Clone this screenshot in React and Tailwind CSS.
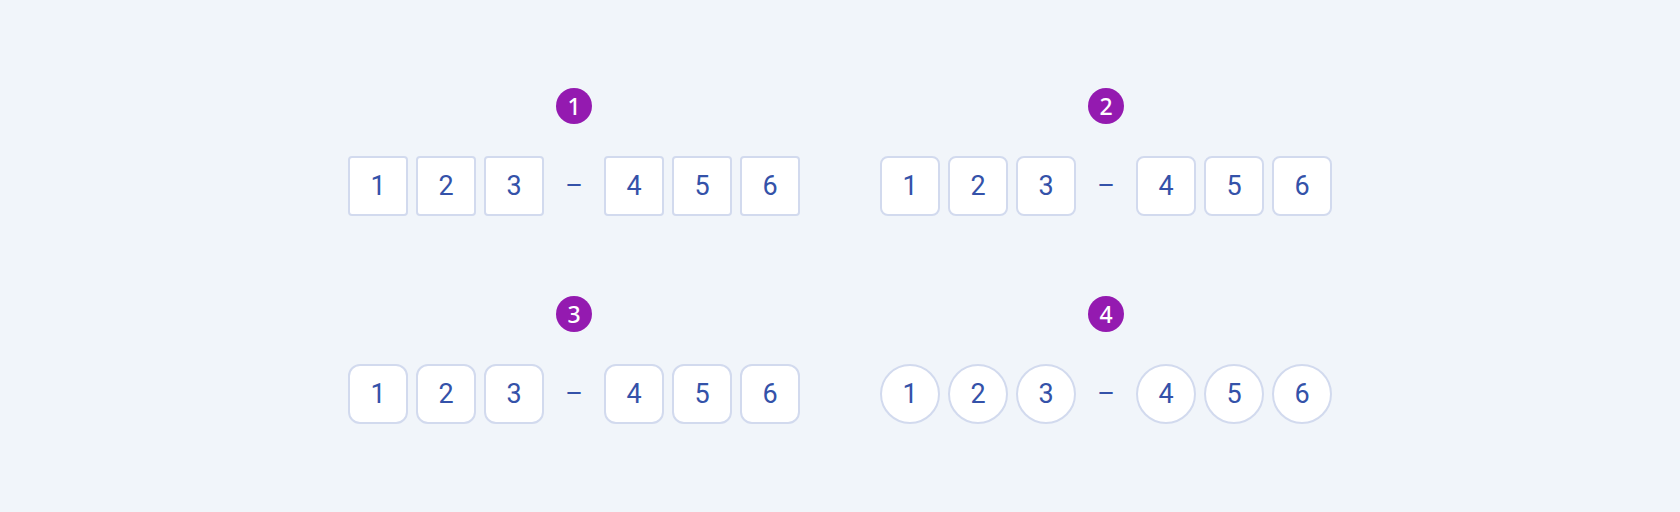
const variants = [
  { id: 1, shape: 'rounded-[4px]' },
  { id: 2, shape: 'rounded-[8px]' },
  { id: 3, shape: 'rounded-[12px]' },
  { id: 4, shape: 'rounded-full' },
]

function DigitCell({ value, shape }) {
  return (
    <div
      className={`flex h-[60px] w-[60px] items-center justify-center border-2 border-[#d2daee] bg-white text-[27px] text-[#3452a9] ${shape}`}
    >
      {value}
    </div>
  )
}

function CodeInput({ id, shape }) {
  return (
    <div className="flex flex-col items-center gap-8">
      <span className="flex h-9 w-9 items-center justify-center rounded-full bg-[#941ab0] font-['Noto_Sans',sans-serif] text-[23px] font-medium leading-none text-white">
        {id}
      </span>
      <div className="flex items-center gap-2">
        {[1, 2, 3].map((n) => (
          <DigitCell key={n} value={n} shape={shape} />
        ))}
        <span className="flex w-[44px] justify-center text-[27px] text-[#3452a9]">–</span>
        {[4, 5, 6].map((n) => (
          <DigitCell key={n} value={n} shape={shape} />
        ))}
      </div>
    </div>
  )
}

export default function App() {
  return (
    <div className="flex h-[512px] w-full items-center justify-center bg-[#f1f5fa] font-['Roboto',sans-serif]">
      <div className="grid grid-cols-2 gap-x-20 gap-y-20">
        {variants.map((v) => (
          <CodeInput key={v.id} id={v.id} shape={v.shape} />
        ))}
      </div>
    </div>
  )
}
